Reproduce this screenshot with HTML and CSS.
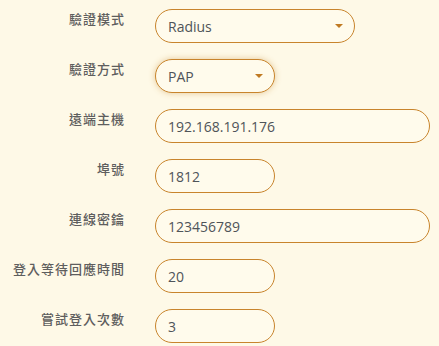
FILE: index.html
```html
<!DOCTYPE html>
<html lang="zh-Hant">
<head>
  <meta charset="UTF-8">
  <meta name="viewport" content="width=device-width, initial-scale=1.0">
  <title>Radius 設定</title>
  <link rel="stylesheet" href="styles.css">
</head>
<body>
  <form class="settings">
    <div class="row">
      <label class="label">驗證模式</label>
      <div class="select wide-select">
        <select>
          <option>Radius</option>
        </select>
      </div>
    </div>
    <div class="row">
      <label class="label">驗證方式</label>
      <div class="select short focused">
        <select>
          <option>PAP</option>
        </select>
      </div>
    </div>
    <div class="row">
      <label class="label">遠端主機</label>
      <input type="text" class="field long" value="192.168.191.176">
    </div>
    <div class="row">
      <label class="label">埠號</label>
      <input type="text" class="field short" value="1812">
    </div>
    <div class="row">
      <label class="label">連線密鑰</label>
      <input type="text" class="field long" value="123456789">
    </div>
    <div class="row">
      <label class="label">登入等待回應時間</label>
      <input type="text" class="field short" value="20">
    </div>
    <div class="row">
      <label class="label">嘗試登入次數</label>
      <input type="text" class="field short" value="3">
    </div>
  </form>
</body>
</html>
```

FILE: styles.css
```css
body { margin: 0; padding: 9px 0 0; background: #fef9e7; font-family: "Open Sans", "Noto Sans", sans-serif; }
.settings { display: flex; flex-direction: column; gap: 16px; }
.row { display: flex; align-items: flex-start; height: 34px; }
.label { width: 125px; margin-right: 30px; text-align: right; font-family: "Noto Sans CJK TC", "Noto Sans CJK SC", sans-serif; font-size: 13px; font-weight: 500; line-height: 20px; letter-spacing: 1px; color: #5e5e5e; }
.field, .select select { box-sizing: border-box; height: 34px; padding: 0 12px; border: 1px solid #c8842c; border-radius: 17px; background: #fffbec; font-family: "Open Sans", sans-serif; font-size: 14px; color: #4f5459; outline: none; }
.field.short, .select.short { width: 120px; }
.field.long { width: 275px; }
.select { position: relative; }
.select.wide-select { width: 200px; }
.select select { width: 100%; appearance: none; -webkit-appearance: none; }
.select::after { content: ""; position: absolute; right: 12px; top: 15px; border-left: 4px solid transparent; border-right: 4px solid transparent; border-top: 4px solid #c07a22; pointer-events: none; }
.select.focused select { box-shadow: 0 0 6px rgba(200, 140, 50, 0.45); }
```
